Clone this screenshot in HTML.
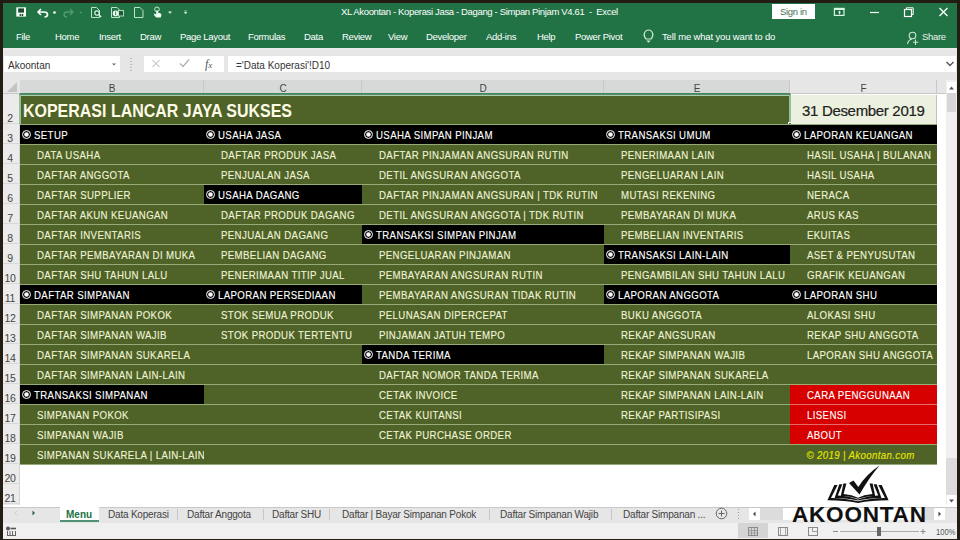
<!DOCTYPE html>
<html><head><meta charset="utf-8">
<style>
*{margin:0;padding:0;box-sizing:border-box}
html,body{width:960px;height:540px;overflow:hidden;background:#221c15;font-family:"Liberation Sans",sans-serif}
.a{position:absolute}
svg{position:absolute;overflow:visible}
#win{position:absolute;left:3px;top:3px;width:954px;height:536px;background:#fff}
#rib{position:absolute;left:3px;top:3px;width:954px;height:45px;background:#217346}
.rt{position:absolute;color:#fff;font-size:9.5px;letter-spacing:-0.35px;white-space:nowrap;line-height:12px}
.tb{position:absolute;top:32px;color:#fff;font-size:9.5px;letter-spacing:-0.3px;white-space:nowrap;line-height:10px}
.wbox{position:absolute;background:#fff}
.ch{position:absolute;top:80px;height:13px;font-size:10px;color:#444;text-align:center;line-height:17px;padding-left:1px;border-right:1px solid #c8c8c8}
.rh{position:absolute;left:3px;width:17px;font-size:10.5px;color:#444;border-bottom:1px solid #d8d8d8}
.rh span{position:absolute;left:0;width:14px;text-align:center;bottom:-1px;line-height:12px;letter-spacing:-0.3px}
.hl{position:absolute;left:20px;width:917px;height:1px;background:#98aa78}
.c{position:absolute;height:19px;font-size:10.5px;line-height:19px;white-space:nowrap;overflow:hidden;letter-spacing:0.4px;-webkit-text-stroke:0.12px currentColor}
.c span{transform:scaleX(0.92);transform-origin:0 0}
.blk{background:#000;color:#fff}
.blk span{position:absolute;left:14px;top:1px}
.rd{position:absolute;left:2px;top:5px;width:9px;height:9px;border-radius:50%;background:#fff;border:1px solid #ccc;box-shadow:inset 0 0 0 1.2px #000}
.grn{color:#f0f4d8}
.grn span{position:absolute;left:17px;top:1px}
.red{background:#d60000;color:#fff}
.red span{position:absolute;left:17px;top:1px}
.cpy{color:#e8e800;font-style:italic}
.cpy span{position:absolute;right:22px;top:1px;transform-origin:100% 0 !important}
.st{position:absolute;top:509.5px;font-size:10px;letter-spacing:-0.2px;color:#444;white-space:nowrap;line-height:10px}
.sep{position:absolute;top:509px;width:1px;height:11px;background:#c6c6c6}
</style></head><body>
<div id="win"></div>
<div id="rib"></div>
<!-- QAT icons -->
<svg style="left:0;top:0" width="960" height="48">
  <g fill="none" stroke="#fff" stroke-width="1.3">
    <!-- save -->
    <rect x="16.3" y="7.3" width="9.7" height="9.3" fill="#f4fff8" stroke="none"/>
    <rect x="18.2" y="8.4" width="5.8" height="4.2" fill="#1d4a2e" stroke="none"/>
    <rect x="19.6" y="14" width="1.3" height="2" fill="#1d4a2e" stroke="none"/>
    <rect x="21.6" y="14" width="1.6" height="2" fill="#1d4a2e" stroke="none"/>
    <!-- undo -->
    <path d="M41 9 L38 12 L41 15 M38.5 12 H44 Q47.5 12 47.5 14.5 Q47.5 17 44.5 17" stroke-width="1.6"/>
    <circle cx="54.5" cy="12.5" r="1.3" fill="#fff" stroke="none"/>
    <!-- redo faded -->
    <path d="M70 9 L73 12 L70 15 M72.5 12 H67 Q64 12 64 14.5 Q64 17 67 17" stroke="#4f9a6e" stroke-width="1.4"/>
    <circle cx="81" cy="12.5" r="1" fill="#4f9a6e" stroke="none"/>
    <!-- print preview -->
    <path d="M91.5 7.5 H96.5 L99.5 10.5 V17.5 H91.5 Z" stroke="#b8e6cb" stroke-width="1"/>
    <circle cx="97" cy="13" r="2.2" stroke="#d8f5e2" stroke-width="1.2" fill="#1d5a38"/>
    <path d="M98.6 14.6 L101.2 17" stroke="#d8f5e2" stroke-width="1.3"/>
    <!-- outlook-ish -->
    <path d="M111.5 7.5 H117 L119.5 10 V17.5 H111.5 Z" stroke="#b8e6cb" stroke-width="1"/>
    <rect x="118.5" y="10.5" width="5" height="5.5" stroke="#b8e6cb" stroke-width="0.9" fill="#1d5a38"/>
    <circle cx="115.6" cy="13.4" r="2.8" fill="#f2fff6" stroke="none"/>
    <rect x="115" y="11.6" width="1.2" height="3.6" fill="#4a8a66" stroke="none"/>
    <!-- document -->
    <path d="M134.5 7.5 H140 L143 10.5 V17.5 H134.5 Z" stroke="#b8e6cb" stroke-width="1"/>
    <!-- touch -->
    <circle cx="157" cy="9.3" r="2.3" stroke="#c8f0d8" stroke-width="1"/>
    <path d="M156.2 10.5 V14.6 L154.6 13.6 Q153.4 14.2 154.2 15.2 L156.2 17.4 H160.6 Q161.6 16 161.2 13.8 L158 12.6 V10.5 Z" fill="#f0fff5" stroke="none"/>
    <path d="M168.6 11.8 H171.4 L170 13.4 Z" fill="#d8f5e2" stroke="#d8f5e2" stroke-width="0.6"/>
    <path d="M184.3 10.9 H186.9" stroke="#b8e6cb" stroke-width="0.7"/><path d="M184.4 12.3 H186.8 L185.6 13.9 Z" fill="#d8f5e2" stroke="#d8f5e2" stroke-width="0.6"/>
    <!-- window controls -->
    <rect x="834.4" y="8.4" width="9.6" height="7" stroke="#d8f5e2" stroke-width="1.2"/>
    <rect x="834" y="8" width="10.4" height="2" fill="#d8f5e2" stroke="none"/>
    <path d="M837.2 11.2 V13.6 M841.8 11.2 V13.6" stroke="#1d5a38" stroke-width="1"/>
    <path d="M839.5 10.4 L841.2 12.6 H837.8 Z M839 12.5 H840 V14.2 H839 Z" fill="#d8f5e2" stroke="none"/>
    <path d="M870 12.5 H879" stroke-width="1.2"/>
    <rect x="904.5" y="9.5" width="7" height="7" stroke-width="1.2"/>
    <path d="M906.5 9.5 V7.8 H913.2 V14.5 H911.5" stroke-width="1"/>
    <path d="M939.5 8 L947.5 16 M947.5 8 L939.5 16" stroke-width="1.3"/>
    <!-- bulb -->
    <path d="M646 39 Q643.5 36 644.3 33.5 Q645.5 30 648.5 30 Q651.5 30 652.7 33.5 Q653.5 36 651 39 Z" stroke="#cfe8d6" stroke-width="1.2"/>
    <path d="M646.3 40.5 H650.7 L648.5 42.7 Z" fill="#cfe8d6" stroke="none"/>
    <!-- person share -->
    <circle cx="912.5" cy="35.5" r="3.3" stroke="#cfe8d6" stroke-width="1.1"/>
    <path d="M907.5 44 Q908.5 39.5 912 39" stroke="#cfe8d6" stroke-width="1.1"/>
    <path d="M915.5 39.5 V45 M913 42.2 H918.3" stroke="#cfe8d6" stroke-width="1.1"/>
  </g>
</svg>
<div class="rt" style="left:341px;top:6px">XL Akoontan - Koperasi Jasa - Dagang - Simpan Pinjam V4.61&nbsp; -&nbsp; Excel</div>
<div class="wbox" style="left:772px;top:4px;width:43px;height:15px"></div>
<div class="rt" style="left:780px;top:6px;color:#4a6e58">Sign in</div>
<div class="tb" style="left:16px">File</div>
<div class="tb" style="left:55px">Home</div>
<div class="tb" style="left:99px">Insert</div>
<div class="tb" style="left:140px">Draw</div>
<div class="tb" style="left:180px">Page Layout</div>
<div class="tb" style="left:248px">Formulas</div>
<div class="tb" style="left:304px">Data</div>
<div class="tb" style="left:342px">Review</div>
<div class="tb" style="left:388px">View</div>
<div class="tb" style="left:426px">Developer</div>
<div class="tb" style="left:486px">Add-ins</div>
<div class="tb" style="left:537px">Help</div>
<div class="tb" style="left:575px">Power Pivot</div>
<div class="tb" style="left:662px;letter-spacing:-0.15px">Tell me what you want to do</div>
<div class="tb" style="left:922px;color:#e6f2ea">Share</div>

<!-- formula bar -->
<div class="a" style="left:3px;top:48px;width:954px;height:32px;background:#e6e6e6"></div>
<div class="a" style="left:3px;top:48px;width:954px;height:2px;background:#ececec"></div>
<div class="wbox" style="left:4px;top:56px;width:116px;height:16px"></div>
<div class="a" style="left:8px;top:60px;font-size:10px;color:#333;line-height:11px">Akoontan</div>

<div class="wbox" style="left:144px;top:56px;width:80px;height:16px"></div>
<div class="a" style="left:205px;top:57px;font-size:12px;font-style:italic;color:#555;font-family:'Liberation Serif',serif;line-height:14px">f<span style="font-size:9px">x</span></div>
<div class="wbox" style="left:228px;top:56px;width:728px;height:16px"></div>
<div class="a" style="left:236px;top:60px;font-size:10px;color:#333;line-height:11px">='Data Koperasi'!D10</div>
<svg style="left:0;top:0" width="960" height="90">
  <path d="M112 63.5 L114 65.5 L116 63.5 Z" fill="#666"/>
  <g fill="#999"><rect x="130.5" y="58" width="1" height="1"/><rect x="130.5" y="61" width="1" height="1"/><rect x="130.5" y="64" width="1" height="1"/><rect x="130.5" y="67" width="1" height="1"/><rect x="130.5" y="70" width="1" height="1"/></g>
  <path d="M152.5 60 L159.5 67 M159.5 60 L152.5 67" stroke="#b0b0b0" stroke-width="1" fill="none"/>
  <path d="M180 63.5 L183 66.5 L189 59.5" stroke="#b0b0b0" stroke-width="1.2" fill="none"/>
  <path d="M946.5 62 L950 65.5 L953.5 62" stroke="#555" stroke-width="1.4" fill="none"/>
  <path d="M949 83.5 L952 87 H946 Z" fill="#555"/>
</svg>

<!-- column headers -->
<div class="a" style="left:3px;top:80px;width:954px;height:14px;background:#e6e6e6"></div>
<div class="a" style="left:3px;top:93px;width:943px;height:1px;background:#c8c8c8"></div>
<div class="a" style="left:20px;top:80px;width:770px;height:14px;background:#d6d9d8"></div>
<div class="a" style="left:20px;top:93px;width:770px;height:1px;background:#3c8a5e"></div>
<svg style="left:0;top:0" width="30" height="100"><path d="M17 82 V92 H7 Z" fill="#c4c4c4"/></svg>
<div class="ch" style="left:20px;width:184px">B</div>
<div class="ch" style="left:204px;width:158px">C</div>
<div class="ch" style="left:362px;width:242px">D</div>
<div class="ch" style="left:604px;width:186px">E</div>
<div class="ch" style="left:790px;width:147px">F</div>
<!-- vertical scrollbar -->
<div class="a" style="left:937px;top:94px;width:20px;height:411px;background:#fff"></div>
<div class="a" style="left:946px;top:80px;width:11px;height:425px;background:#f0f0f0"></div>
<div class="a" style="left:947px;top:93px;width:9px;height:19px;background:#d6d6d6"></div>
<div class="wbox" style="left:947px;top:82px;width:9px;height:11px"></div>
<svg style="left:0;top:0" width="960" height="540">
  <path d="M949 89.5 L951.5 86.5 L954 89.5 Z" fill="#555"/>
</svg>
<div class="a" style="left:946px;top:458px;width:11px;height:37px;background:#dcdcdc"></div>
<div class="wbox" style="left:947px;top:495px;width:9px;height:10px"></div>

<!-- grid area -->
<div class="a" style="left:3px;top:94px;width:17px;height:411px;background:#ebebeb;border-right:1px solid #d4d4d4"></div>
<div class="rh" style="top:94px;height:30px"><span>2</span></div>
<div class="rh" style="top:124px;height:20px"><span>3</span></div>
<div class="rh" style="top:144px;height:20px"><span>4</span></div>
<div class="rh" style="top:164px;height:20px"><span>5</span></div>
<div class="rh" style="top:184px;height:20px"><span>6</span></div>
<div class="rh" style="top:204px;height:20px"><span>7</span></div>
<div class="rh" style="top:224px;height:20px"><span>8</span></div>
<div class="rh" style="top:244px;height:20px"><span>9</span></div>
<div class="rh" style="top:264px;height:20px"><span>10</span></div>
<div class="rh" style="top:284px;height:20px"><span>11</span></div>
<div class="rh" style="top:304px;height:20px"><span>12</span></div>
<div class="rh" style="top:324px;height:20px"><span>13</span></div>
<div class="rh" style="top:344px;height:20px"><span>14</span></div>
<div class="rh" style="top:364px;height:20px"><span>15</span></div>
<div class="rh" style="top:384px;height:20px"><span>16</span></div>
<div class="rh" style="top:404px;height:20px"><span>17</span></div>
<div class="rh" style="top:424px;height:20px"><span>18</span></div>
<div class="rh" style="top:444px;height:20px"><span>19</span></div>
<div class="rh" style="top:464px;height:20px"><span>20</span></div>
<div class="rh" style="top:484px;height:20px"><span>21</span></div>
<div class="a" style="left:19px;top:94px;width:772px;height:30px;background:#4f6228;border-top:1px solid #5f8a6e;box-shadow:inset 2px 0 0 0 #96c29a, inset -2px 0 0 0 #96c29a, inset 0 1px 0 0 #a8d0a8"></div>
<div class="a" style="left:788px;top:122px;width:4px;height:4px;background:#2f7a50;border:1px solid #fff"></div>
<div class="a" style="left:23px;top:101px;font-size:17.5px;font-weight:bold;color:#fbfbe6;line-height:20px;transform:scaleX(0.913);transform-origin:0 0;white-space:nowrap">KOPERASI LANCAR JAYA SUKSES</div>
<div class="a" style="left:791px;top:95px;width:146px;height:29px;background:#ebf1de"></div>
<div class="a" style="left:802px;top:102px;font-size:15px;color:#222;letter-spacing:-0.32px;line-height:18px;-webkit-text-stroke:0.2px #222">31 Desember 2019</div>
<div class="a" style="left:20px;top:124px;width:917px;height:340px;background:#4f6228"></div>
<div class="hl" style="top:124px"></div>
<div class="hl" style="top:144px"></div>
<div class="hl" style="top:164px"></div>
<div class="hl" style="top:184px"></div>
<div class="hl" style="top:204px"></div>
<div class="hl" style="top:224px"></div>
<div class="hl" style="top:244px"></div>
<div class="hl" style="top:264px"></div>
<div class="hl" style="top:284px"></div>
<div class="hl" style="top:304px"></div>
<div class="hl" style="top:324px"></div>
<div class="hl" style="top:344px"></div>
<div class="hl" style="top:364px"></div>
<div class="hl" style="top:384px"></div>
<div class="hl" style="top:404px"></div>
<div class="hl" style="top:424px"></div>
<div class="hl" style="top:444px"></div>
<div class="hl" style="top:464px"></div>
<div class="a" style="left:790px;top:404px;width:147px;height:1px;background:#e46a6a"></div>
<div class="a" style="left:790px;top:424px;width:147px;height:1px;background:#e46a6a"></div>
<div class="a" style="left:936px;top:95px;width:1px;height:29px;background:#c0c0c0"></div>
<div class="c blk" style="left:20px;top:125px;width:184px"><i class="rd"></i><span>SETUP</span></div>
<div class="c blk" style="left:204px;top:125px;width:158px"><i class="rd"></i><span>USAHA JASA</span></div>
<div class="c blk" style="left:362px;top:125px;width:242px"><i class="rd"></i><span>USAHA SIMPAN PINJAM</span></div>
<div class="c blk" style="left:604px;top:125px;width:186px"><i class="rd"></i><span>TRANSAKSI UMUM</span></div>
<div class="c blk" style="left:790px;top:125px;width:147px"><i class="rd"></i><span>LAPORAN KEUANGAN</span></div>
<div class="c grn" style="left:20px;top:145px;width:184px"><span>DATA USAHA</span></div>
<div class="c grn" style="left:204px;top:145px;width:158px"><span>DAFTAR PRODUK JASA</span></div>
<div class="c grn" style="left:362px;top:145px;width:242px"><span>DAFTAR PINJAMAN ANGSURAN RUTIN</span></div>
<div class="c grn" style="left:604px;top:145px;width:186px"><span>PENERIMAAN LAIN</span></div>
<div class="c grn" style="left:790px;top:145px;width:147px"><span>HASIL USAHA | BULANAN</span></div>
<div class="c grn" style="left:20px;top:165px;width:184px"><span>DAFTAR ANGGOTA</span></div>
<div class="c grn" style="left:204px;top:165px;width:158px"><span>PENJUALAN JASA</span></div>
<div class="c grn" style="left:362px;top:165px;width:242px"><span>DETIL ANGSURAN ANGGOTA</span></div>
<div class="c grn" style="left:604px;top:165px;width:186px"><span>PENGELUARAN LAIN</span></div>
<div class="c grn" style="left:790px;top:165px;width:147px"><span>HASIL USAHA</span></div>
<div class="c grn" style="left:20px;top:185px;width:184px"><span>DAFTAR SUPPLIER</span></div>
<div class="c blk" style="left:204px;top:185px;width:158px"><i class="rd"></i><span>USAHA DAGANG</span></div>
<div class="c grn" style="left:362px;top:185px;width:242px"><span>DAFTAR PINJAMAN ANGSURAN | TDK RUTIN</span></div>
<div class="c grn" style="left:604px;top:185px;width:186px"><span>MUTASI REKENING</span></div>
<div class="c grn" style="left:790px;top:185px;width:147px"><span>NERACA</span></div>
<div class="c grn" style="left:20px;top:205px;width:184px"><span>DAFTAR AKUN KEUANGAN</span></div>
<div class="c grn" style="left:204px;top:205px;width:158px"><span>DAFTAR PRODUK DAGANG</span></div>
<div class="c grn" style="left:362px;top:205px;width:242px"><span>DETIL ANGSURAN ANGGOTA | TDK RUTIN</span></div>
<div class="c grn" style="left:604px;top:205px;width:186px"><span>PEMBAYARAN DI MUKA</span></div>
<div class="c grn" style="left:790px;top:205px;width:147px"><span>ARUS KAS</span></div>
<div class="c grn" style="left:20px;top:225px;width:184px"><span>DAFTAR INVENTARIS</span></div>
<div class="c grn" style="left:204px;top:225px;width:158px"><span>PENJUALAN DAGANG</span></div>
<div class="c blk" style="left:362px;top:225px;width:242px"><i class="rd"></i><span>TRANSAKSI SIMPAN PINJAM</span></div>
<div class="c grn" style="left:604px;top:225px;width:186px"><span>PEMBELIAN INVENTARIS</span></div>
<div class="c grn" style="left:790px;top:225px;width:147px"><span>EKUITAS</span></div>
<div class="c grn" style="left:20px;top:245px;width:184px"><span>DAFTAR PEMBAYARAN DI MUKA</span></div>
<div class="c grn" style="left:204px;top:245px;width:158px"><span>PEMBELIAN DAGANG</span></div>
<div class="c grn" style="left:362px;top:245px;width:242px"><span>PENGELUARAN PINJAMAN</span></div>
<div class="c blk" style="left:604px;top:245px;width:186px"><i class="rd"></i><span>TRANSAKSI LAIN-LAIN</span></div>
<div class="c grn" style="left:790px;top:245px;width:147px"><span>ASET &amp; PENYUSUTAN</span></div>
<div class="c grn" style="left:20px;top:265px;width:184px"><span>DAFTAR SHU TAHUN LALU</span></div>
<div class="c grn" style="left:204px;top:265px;width:158px"><span>PENERIMAAN TITIP JUAL</span></div>
<div class="c grn" style="left:362px;top:265px;width:242px"><span>PEMBAYARAN ANGSURAN RUTIN</span></div>
<div class="c grn" style="left:604px;top:265px;width:186px"><span>PENGAMBILAN SHU TAHUN LALU</span></div>
<div class="c grn" style="left:790px;top:265px;width:147px"><span>GRAFIK KEUANGAN</span></div>
<div class="c blk" style="left:20px;top:285px;width:184px"><i class="rd"></i><span>DAFTAR SIMPANAN</span></div>
<div class="c blk" style="left:204px;top:285px;width:158px"><i class="rd"></i><span>LAPORAN PERSEDIAAN</span></div>
<div class="c grn" style="left:362px;top:285px;width:242px"><span>PEMBAYARAN ANGSURAN TIDAK RUTIN</span></div>
<div class="c blk" style="left:604px;top:285px;width:186px"><i class="rd"></i><span>LAPORAN ANGGOTA</span></div>
<div class="c blk" style="left:790px;top:285px;width:147px"><i class="rd"></i><span>LAPORAN SHU</span></div>
<div class="c grn" style="left:20px;top:305px;width:184px"><span>DAFTAR SIMPANAN POKOK</span></div>
<div class="c grn" style="left:204px;top:305px;width:158px"><span>STOK SEMUA PRODUK</span></div>
<div class="c grn" style="left:362px;top:305px;width:242px"><span>PELUNASAN DIPERCEPAT</span></div>
<div class="c grn" style="left:604px;top:305px;width:186px"><span>BUKU ANGGOTA</span></div>
<div class="c grn" style="left:790px;top:305px;width:147px"><span>ALOKASI SHU</span></div>
<div class="c grn" style="left:20px;top:325px;width:184px"><span>DAFTAR SIMPANAN WAJIB</span></div>
<div class="c grn" style="left:204px;top:325px;width:158px"><span>STOK PRODUK TERTENTU</span></div>
<div class="c grn" style="left:362px;top:325px;width:242px"><span>PINJAMAN JATUH TEMPO</span></div>
<div class="c grn" style="left:604px;top:325px;width:186px"><span>REKAP ANGSURAN</span></div>
<div class="c grn" style="left:790px;top:325px;width:147px"><span>REKAP SHU ANGGOTA</span></div>
<div class="c grn" style="left:20px;top:345px;width:184px"><span>DAFTAR SIMPANAN SUKARELA</span></div>
<div class="c blk" style="left:362px;top:345px;width:242px"><i class="rd"></i><span>TANDA TERIMA</span></div>
<div class="c grn" style="left:604px;top:345px;width:186px"><span>REKAP SIMPANAN WAJIB</span></div>
<div class="c grn" style="left:790px;top:345px;width:147px"><span>LAPORAN SHU ANGGOTA</span></div>
<div class="c grn" style="left:20px;top:365px;width:184px"><span>DAFTAR SIMPANAN LAIN-LAIN</span></div>
<div class="c grn" style="left:362px;top:365px;width:242px"><span>DAFTAR NOMOR TANDA TERIMA</span></div>
<div class="c grn" style="left:604px;top:365px;width:186px"><span>REKAP SIMPANAN SUKARELA</span></div>
<div class="c blk" style="left:20px;top:385px;width:184px"><i class="rd"></i><span>TRANSAKSI SIMPANAN</span></div>
<div class="c grn" style="left:362px;top:385px;width:242px"><span>CETAK INVOICE</span></div>
<div class="c grn" style="left:604px;top:385px;width:186px"><span>REKAP SIMPANAN LAIN-LAIN</span></div>
<div class="c red" style="left:790px;top:385px;width:147px"><span>CARA PENGGUNAAN</span></div>
<div class="c grn" style="left:20px;top:405px;width:184px"><span>SIMPANAN POKOK</span></div>
<div class="c grn" style="left:362px;top:405px;width:242px"><span>CETAK KUITANSI</span></div>
<div class="c grn" style="left:604px;top:405px;width:186px"><span>REKAP PARTISIPASI</span></div>
<div class="c red" style="left:790px;top:405px;width:147px"><span>LISENSI</span></div>
<div class="c grn" style="left:20px;top:425px;width:184px"><span>SIMPANAN WAJIB</span></div>
<div class="c grn" style="left:362px;top:425px;width:242px"><span>CETAK PURCHASE ORDER</span></div>
<div class="c red" style="left:790px;top:425px;width:147px"><span>ABOUT</span></div>
<div class="c grn" style="left:20px;top:445px;width:184px"><span>SIMPANAN SUKARELA | LAIN-LAIN</span></div>
<div class="c cpy" style="left:790px;top:445px;width:147px"><span>&copy; 2019 | Akoontan.com</span></div>

<!-- sheet tabs -->
<div class="a" style="left:3px;top:505px;width:954px;height:18px;background:#e6e6e6;border-top:1px solid #fff;box-shadow:inset 0 1px 0 0 #fff, inset 0 2px 0 0 #c8c8c8"></div>
<div class="a" style="left:3px;top:523px;width:954px;height:16px;background:#f0f0f0"></div>
<svg style="left:0;top:0" width="960" height="540">
  <path d="M17 510.5 L15 513 L17 515.5" stroke="#cfcfcf" stroke-width="1" fill="none"/>
  <path d="M32.5 510.5 L35 513 L32.5 515.5 Z" fill="#2b5f45"/>
</svg>
<div class="wbox" style="left:60px;top:506px;width:39px;height:16px"></div>
<div class="a" style="left:60px;top:520px;width:39px;height:2px;background:#4f9276"></div>
<div class="st" style="left:66px;color:#217346;font-weight:bold;letter-spacing:0">Menu</div>
<div class="st" style="left:108px">Data Koperasi</div>
<div class="sep" style="left:177px"></div>
<div class="st" style="left:187px">Daftar Anggota</div>
<div class="sep" style="left:263px"></div>
<div class="st" style="left:272px">Daftar SHU</div>
<div class="sep" style="left:329px"></div>
<div class="st" style="left:342px">Daftar | Bayar Simpanan Pokok</div>
<div class="sep" style="left:489px"></div>
<div class="st" style="left:500px">Daftar Simpanan Wajib</div>
<div class="sep" style="left:611px"></div>
<div class="st" style="left:623px">Daftar Simpanan ...</div>
<svg style="left:0;top:0" width="960" height="540">
  <circle cx="721.5" cy="513.5" r="5.3" stroke="#666" stroke-width="1" fill="none"/>
  <path d="M721.5 510.5 V516.5 M718.5 513.5 H724.5" stroke="#666" stroke-width="1"/>
  <g fill="#999"><rect x="738" y="509" width="1" height="1"/><rect x="738" y="512" width="1" height="1"/><rect x="738" y="515" width="1" height="1"/><rect x="738" y="518" width="1" height="1"/></g>
</svg>
<div class="wbox" style="left:749px;top:508px;width:11px;height:12px"></div>
<div class="a" style="left:760px;top:508px;width:174px;height:12px;background:#dcdcdc"></div>
<div class="wbox" style="left:783px;top:508px;width:139px;height:12px"></div>
<div class="wbox" style="left:934px;top:508px;width:11px;height:12px"></div>
<svg style="left:0;top:0" width="960" height="540">
  <path d="M755.5 511.5 L753 514 L755.5 516.5 Z" fill="#444"/>
  <path d="M938.5 511.5 L941 514 L938.5 516.5 Z" fill="#444"/>
  <path d="M949 499.5 L951.5 502.5 L954 499.5 Z" fill="#555"/>
</svg>
<!-- status bar -->
<svg style="left:0;top:0" width="960" height="540">
  <g stroke="#666" stroke-width="1" fill="none">
    <circle cx="8" cy="528.5" r="2" fill="#555" stroke="none"/>
    <rect x="10.5" y="527.7" width="5.5" height="1.6" fill="#555" stroke="none"/>
    <path d="M7.5 531 V536 M10 531 V536 M12.5 531 V536 M15.5 531 V536 M7 535.5 H16" stroke="#666" stroke-width="1"/>
  </g>
  <rect x="738" y="523" width="30" height="15" fill="#d4d4d4"/>
  <g stroke="#8a8a8a" stroke-width="1" fill="none">
    <rect x="748.5" y="527.5" width="9" height="8"/>
    <path d="M751.5 527.5 V535.5 M754.5 527.5 V535.5 M748.5 530.5 H757.5 M748.5 533 H757.5" stroke-width="0.7"/>
    <rect x="778.5" y="527.5" width="9" height="8"/>
    <path d="M780.5 527.5 V535.5 M785.5 527.5 V535.5" stroke-width="0.7"/>
    <rect x="808.5" y="527.5" width="9" height="8"/>
    <path d="M812.5 527.5 V531.5 H817.5" stroke-width="0.8"/>
    <path d="M833 531.5 H838"/>
    <path d="M840 531.5 H919" stroke="#aaa"/>
    <path d="M920.5 531.5 H925.5 M923 529 V534"/>
  </g>
  <rect x="877" y="527" width="4" height="9" fill="#666"/>
</svg>
<div class="a" style="left:936px;top:526.5px;font-size:9.5px;color:#555;line-height:10px;transform:scaleX(0.8);transform-origin:0 0">100%</div>

<!-- logo overlay -->
<svg style="left:0;top:0" width="960" height="540">
  <path d="M849 483 L853.5 480.6 L858.3 487 Q866 474.5 879.6 465.5 Q869.5 477 859.5 494.5 Z" fill="#111"/>
  <g fill="#111">
    <path d="M834.3 485 L837.6 485 L831 497.9 Q846 498.3 858 501.3 L858 502.9 Q845 500.3 827.4 500.3 Z"/>
    <path d="M839.3 484.2 L842.4 484.2 L837.8 495.6 Q849 496.2 858 499.5 L858 500.6 Q848 497.9 834.6 497.9 Z"/>
    <path d="M843.4 483.4 L846.4 483.4 L843.6 494 Q852 494.9 858 497.7 L858 498.7 Q850 496.3 840.8 496.1 Z"/>
    <path d="M 881.7 485 L 878.4 485 L 885 497.9 Q 870 498.3 858 501.3 L 858 502.9 Q 871 500.3 888.6 500.3 Z"/>
    <path d="M 876.7 484.2 L 873.6 484.2 L 878.2 495.6 Q 867 496.2 858 499.5 L 858 500.6 Q 868 497.9 881.4 497.9 Z"/>
    <path d="M 872.6 483.4 L 869.6 483.4 L 872.4 494 Q 864 494.9 858 497.7 L 858 498.7 Q 866 496.3 875.2 496.1 Z"/>
  </g>
</svg>
<div class="a" style="left:792px;top:504px;font-size:22.5px;font-weight:bold;color:#111;letter-spacing:0.8px;line-height:22px;-webkit-text-stroke:0.1px #111;white-space:nowrap">AKOONTAN</div>
</body></html>
